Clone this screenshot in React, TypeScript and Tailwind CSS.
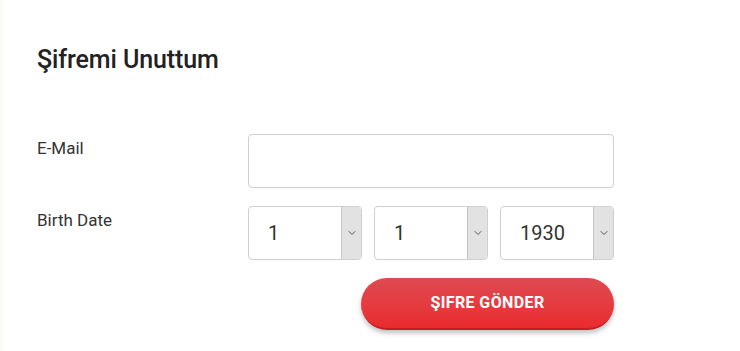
import { ChevronDown } from 'lucide-react';

function DateSelect({ value }: { value: string }) {
  return (
    <div className="flex h-[54px] w-[114px] rounded-[4px] border border-[#cfcfcf] bg-white overflow-hidden">
      <div className="flex flex-1 items-center pl-[19px] text-[20px] text-[#333]">{value}</div>
      <div className="flex w-[20px] items-center justify-center border-l border-[#c4c4c4] bg-[#e2e2e2]">
        <ChevronDown className="h-[12px] w-[12px] text-[#555]" strokeWidth={2} />
      </div>
    </div>
  );
}

export default function App() {
  return (
    <div className="flex h-[351px] w-[740px] bg-white" style={{ fontFamily: 'Roboto, "Liberation Sans", sans-serif' }}>
      <div className="w-[3px] bg-[#fdf9f6]" />
      <div className="flex flex-col pl-[34px] pt-[45px]">
        <h2 className="text-[25px] font-medium leading-[30px] text-[#222] tracking-[-0.1px]">Şifremi Unuttum</h2>

        <div className="mt-[59px] flex items-start">
          <label className="w-[211px] pt-[2px] text-[17px] leading-[24px] text-[#333]">E-Mail</label>
          <input type="text" className="h-[54px] w-[366px] rounded-[4px] border border-[#cfcfcf] bg-white px-3 outline-none" />
        </div>

        <div className="mt-[18px] flex items-start">
          <label className="w-[211px] pt-[2px] text-[17px] leading-[24px] text-[#333]">Birth Date</label>
          <div className="flex gap-[12px]">
            <DateSelect value="1" />
            <DateSelect value="1" />
            <DateSelect value="1930" />
          </div>
        </div>

        <div className="mt-[18px] flex pl-[324px]">
          <button className="h-[52px] w-[253px] rounded-full border-b-2 border-[#c11f25] bg-gradient-to-b from-[#de4a51] to-[#ea2a2d] text-[16px] font-bold tracking-[0.4px] text-white shadow-[0_3px_5px_rgba(0,0,0,0.25)]">
            ŞIFRE GÖNDER
          </button>
        </div>
      </div>
    </div>
  );
}
